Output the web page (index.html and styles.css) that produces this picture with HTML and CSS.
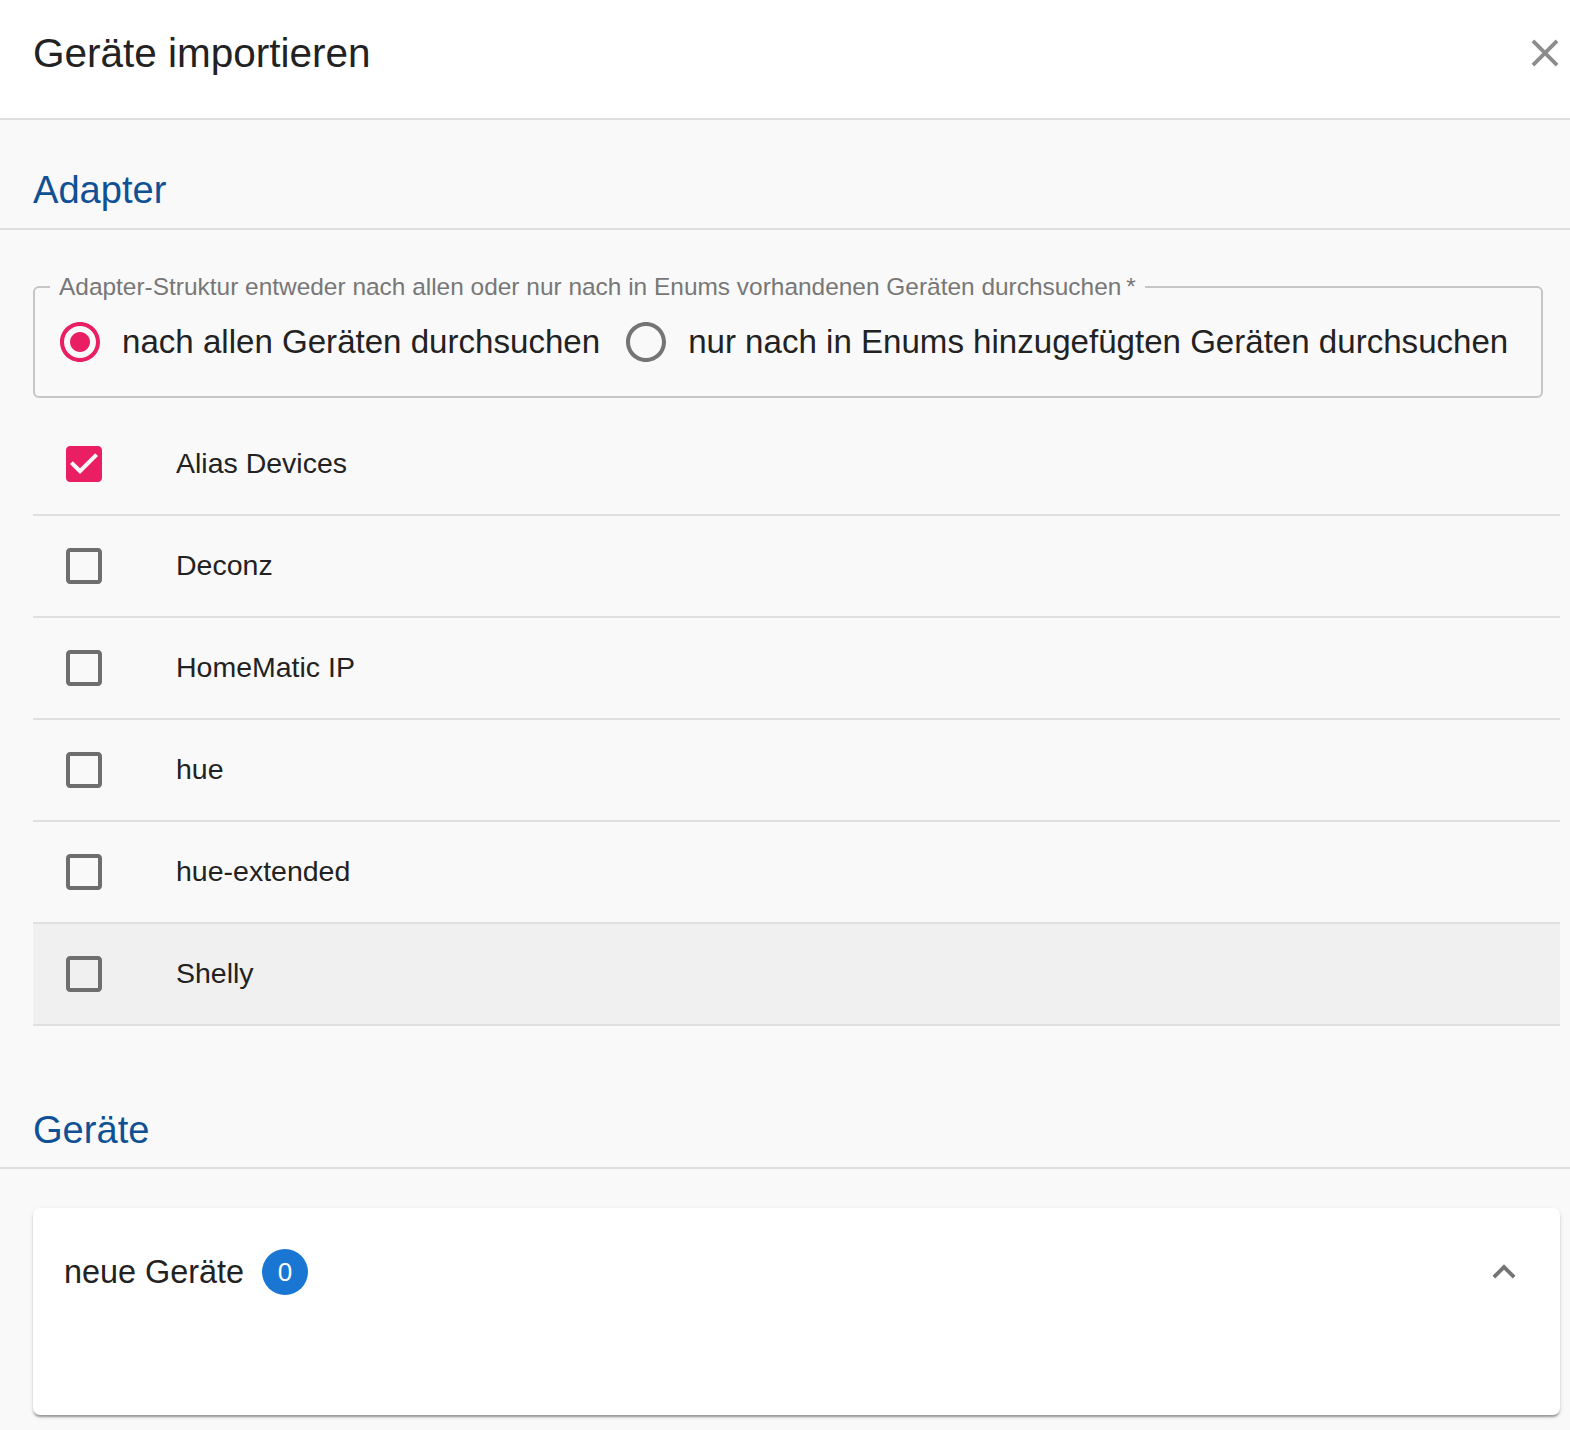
FILE: index.html
```html
<!DOCTYPE html>
<html lang="de">
<head>
<meta charset="utf-8">
<title>Geräte importieren</title>
<link rel="stylesheet" href="styles.css">
</head>
<body>
<div class="dialog">
  <header class="dlg-header">
    <h1 class="dlg-title">Geräte importieren</h1>
    <svg class="close" viewBox="0 0 24 24"><path d="M19 6.41L17.59 5 12 10.59 6.41 5 5 6.41 10.59 12 5 17.59 6.41 19 12 13.41 17.59 19 19 17.59 13.41 12z"/></svg>
  </header>

  <h2 class="section-title">Adapter</h2>
  <div class="section-body">
    <fieldset class="choice">
      <legend>Adapter-Struktur entweder nach allen oder nur nach in Enums vorhandenen Geräten durchsuchen&thinsp;*</legend>
      <div class="radios">
        <div class="radio">
          <svg class="radio-icon checked" viewBox="0 0 24 24"><path d="M12 2C6.48 2 2 6.48 2 12s4.48 10 10 10 10-4.48 10-10S17.52 2 12 2zm0 18c-4.42 0-8-3.58-8-8s3.58-8 8-8 8 3.58 8 8-3.58 8-8 8z"/><path d="M12 7c-2.76 0-5 2.24-5 5s2.24 5 5 5 5-2.24 5-5-2.24-5-5-5z"/></svg>
          <span class="radio-label">nach allen Geräten durchsuchen</span>
        </div>
        <div class="radio">
          <svg class="radio-icon" viewBox="0 0 24 24"><path d="M12 2C6.48 2 2 6.48 2 12s4.48 10 10 10 10-4.48 10-10S17.52 2 12 2zm0 18c-4.42 0-8-3.58-8-8s3.58-8 8-8 8 3.58 8 8-3.58 8-8 8z"/></svg>
          <span class="radio-label">nur nach in Enums hinzugefügten Geräten durchsuchen</span>
        </div>
      </div>
    </fieldset>

    <ul class="adapters">
      <li class="adapter">
        <svg class="cb checked" viewBox="0 0 24 24"><path d="M19 3H5c-1.11 0-2 .9-2 2v14c0 1.1.89 2 2 2h14c1.11 0 2-.9 2-2V5c0-1.1-.89-2-2-2zm-9 14l-5-5 1.41-1.41L10 14.17l7.59-7.59L19 8l-9 9z"/></svg>
        <span class="adapter-name">Alias Devices</span>
      </li>
      <li class="adapter">
        <svg class="cb" viewBox="0 0 24 24"><path d="M19 5v14H5V5h14m0-2H5c-1.1 0-2 .9-2 2v14c0 1.1.9 2 2 2h14c1.1 0 2-.9 2-2V5c0-1.1-.9-2-2-2z"/></svg>
        <span class="adapter-name">Deconz</span>
      </li>
      <li class="adapter">
        <svg class="cb" viewBox="0 0 24 24"><path d="M19 5v14H5V5h14m0-2H5c-1.1 0-2 .9-2 2v14c0 1.1.9 2 2 2h14c1.1 0 2-.9 2-2V5c0-1.1-.9-2-2-2z"/></svg>
        <span class="adapter-name">HomeMatic IP</span>
      </li>
      <li class="adapter">
        <svg class="cb" viewBox="0 0 24 24"><path d="M19 5v14H5V5h14m0-2H5c-1.1 0-2 .9-2 2v14c0 1.1.9 2 2 2h14c1.1 0 2-.9 2-2V5c0-1.1-.9-2-2-2z"/></svg>
        <span class="adapter-name">hue</span>
      </li>
      <li class="adapter">
        <svg class="cb" viewBox="0 0 24 24"><path d="M19 5v14H5V5h14m0-2H5c-1.1 0-2 .9-2 2v14c0 1.1.9 2 2 2h14c1.1 0 2-.9 2-2V5c0-1.1-.9-2-2-2z"/></svg>
        <span class="adapter-name">hue-extended</span>
      </li>
      <li class="adapter hover">
        <svg class="cb" viewBox="0 0 24 24"><path d="M19 5v14H5V5h14m0-2H5c-1.1 0-2 .9-2 2v14c0 1.1.9 2 2 2h14c1.1 0 2-.9 2-2V5c0-1.1-.9-2-2-2z"/></svg>
        <span class="adapter-name">Shelly</span>
      </li>
    </ul>
  </div>

  <h2 class="section-title">Geräte</h2>
  <div class="section-body devices">
    <div class="card">
      <div class="card-summary">
        <span class="card-title">neue Geräte</span>
        <span class="badge">0</span>
        <svg class="chevron" viewBox="0 0 24 24"><path d="M12 8l-6 6 1.41 1.41L12 10.83l4.59 4.58L18 14z"/></svg>
      </div>
      <div class="card-details"></div>
    </div>
  </div>
</div>
</body>
</html>
```

FILE: styles.css
```css
* { box-sizing: border-box; }

html, body {
  margin: 0;
  padding: 0;
  background: #f9f9f9;
  font-family: "Liberation Sans", Arial, sans-serif;
  color: #222;
}

.dialog {
  background: #f9f9f9;
}

.dlg-header {
  display: flex;
  justify-content: space-between;
  align-items: flex-start;
  background: #fff;
  padding: 29px 2px 41px 33px;
  border-bottom: 2px solid #dedede;
}

.dlg-title {
  margin: 0;
  font-size: 40.5px;
  line-height: 48px;
  font-weight: 400;
  color: #222;
}

.close {
  width: 46px;
  height: 46px;
  margin-top: 1px;
  fill: #8c8c8c;
}

.section-title {
  margin: 0;
  padding: 48px 33px 14.5px 33px;
  font-size: 38.1px;
  line-height: 45px;
  font-weight: 400;
  color: #0f5194;
  border-bottom: 2px solid #dedede;
}

.section-body {
  padding: 45px 10px 34px 33px;
}

.choice {
  margin: 0 17px 0 0;
  padding: 13px 15px 24px 15px;
  border: 2px solid #c6c6c6;
  border-radius: 6px;
  min-width: 0;
}

.choice legend {
  padding: 0 9px;
  font-size: 24.45px;
  line-height: 24px;
  color: #777;
}

.radios {
  display: flex;
  align-items: center;
  height: 60px;
  margin-left: 6px;
}

.radio {
  display: flex;
  align-items: center;
  margin-right: 22px;
}

.radio-icon {
  width: 48px;
  height: 48px;
  fill: #757575;
  flex: none;
}

.radio-icon.checked {
  fill: #e91e63;
}

.radio-label {
  margin-left: 18px;
  font-size: 33.1px;
  color: #222;
  white-space: nowrap;
}

.adapters {
  list-style: none;
  margin: 16px 0 0 0;
  padding: 0;
}

.adapter {
  display: flex;
  align-items: center;
  height: 102px;
  border-bottom: 2px solid #e0e0e0;
  padding-left: 27px;
}

.adapter.hover {
  background: #f0f0f0;
}

.cb {
  width: 48px;
  height: 48px;
  fill: #6e6e6e;
  flex: none;
}

.cb.checked {
  fill: #e91e63;
}

.adapter-name {
  margin-left: 68px;
  font-size: 28.5px;
  color: #222;
}

.devices {
  padding-top: 39px;
  padding-bottom: 16px;
}

.card {
  background: #fff;
  border-radius: 7px;
  height: 207px;
  padding-top: 24px;
  box-shadow: 0 3px 2px -1px rgba(0,0,0,0.22), 0 2px 2px 0 rgba(0,0,0,0.14), 0 2px 5px 0 rgba(0,0,0,0.10);
}

.card-summary {
  display: flex;
  align-items: center;
  height: 80px;
  padding: 0 33px 0 31px;
}

.card-title {
  font-size: 32.4px;
  color: #222;
}

.badge {
  display: flex;
  align-items: center;
  justify-content: center;
  width: 46px;
  height: 46px;
  margin-left: 18px;
  border-radius: 50%;
  background: #1976d2;
  color: #fff;
  font-size: 26px;
}

.chevron {
  width: 46px;
  height: 46px;
  margin-left: auto;
  fill: #757575;
}
```
